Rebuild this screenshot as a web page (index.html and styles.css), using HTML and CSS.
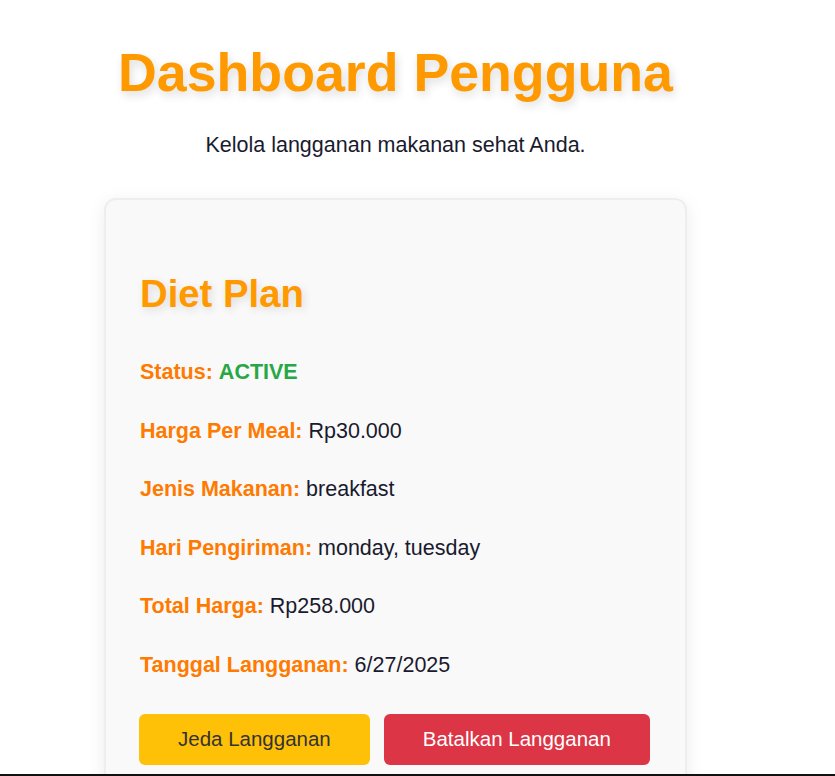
FILE: index.html
```html
<!DOCTYPE html>
<html lang="id">
<head>
<meta charset="utf-8">
<title>Dashboard Pengguna</title>
<link rel="stylesheet" href="styles.css">
</head>
<body>
<main class="page">
  <h1 class="title">Dashboard Pengguna</h1>
  <p class="subtitle">Kelola langganan makanan sehat Anda.</p>
  <section class="card">
    <h2 class="plan-name">Diet Plan</h2>
    <div class="details">
      <p class="row"><span class="label">Status:</span> <span class="status">ACTIVE</span></p>
      <p class="row"><span class="label">Harga Per Meal:</span> Rp30.000</p>
      <p class="row"><span class="label">Jenis Makanan:</span> breakfast</p>
      <p class="row"><span class="label">Hari Pengiriman:</span> monday, tuesday</p>
      <p class="row"><span class="label">Total Harga:</span> Rp258.000</p>
      <p class="row"><span class="label">Tanggal Langganan:</span> 6/27/2025</p>
    </div>
    <div class="actions">
      <button class="btn btn-pause">Jeda Langganan</button>
      <button class="btn btn-cancel">Batalkan Langganan</button>
    </div>
  </section>
</main>
<div class="bottom-line"></div>
</body>
</html>
```
FILE: styles.css
```css
html, body {
  margin: 0;
  padding: 0;
  background: #ffffff;
  font-family: "Liberation Sans", Arial, sans-serif;
  color: #1a1a2e;
}
.page {
  width: 791px;
  display: flex;
  flex-direction: column;
  align-items: center;
  padding-top: 41px;
}
.title {
  margin: 0;
  font-size: 53.7px;
  font-weight: 700;
  line-height: 62px;
  color: #ff9900;
  text-shadow: 2px 4px 10px rgba(0, 0, 0, 0.14);
}
.subtitle {
  margin: 30px 0 0;
  font-size: 21.5px;
  line-height: 25px;
  color: #1a1a2e;
}
.card {
  margin-top: 40px;
  width: 583px;
  box-sizing: border-box;
  background: #f9f9f9;
  border: 2px solid #eeeeee;
  border-radius: 12px;
  box-shadow: 0 4px 18px rgba(0, 0, 0, 0.08);
  padding: 72px 32px 40px 33px;
}
.plan-name {
  margin: 0 0 0 1px;
  font-size: 38.3px;
  line-height: 44px;
  font-weight: 700;
  color: #ff9900;
  text-shadow: 2px 3px 8px rgba(0, 0, 0, 0.12);
}
.details {
  margin-top: 44px;
  margin-left: 1px;
  display: flex;
  flex-direction: column;
  gap: 33.5px;
}
.row {
  margin: 0;
  font-size: 21.5px;
  line-height: 25px;
  color: #1a1a2e;
}
.label {
  font-weight: 700;
  color: #ff7a00;
}
.status {
  font-weight: 700;
  color: #28a745;
}
.actions {
  margin-top: 36px;
  display: flex;
  gap: 14px;
}
.btn {
  flex-shrink: 0;
  white-space: nowrap;
  font-family: "Liberation Sans", Arial, sans-serif;
  font-size: 20.5px;
  line-height: 22px;
  padding: 14.5px 39px;
  border: none;
  border-radius: 6px;
  cursor: pointer;
}
.btn-pause {
  background: #ffc107;
  color: #333333;
}
.btn-cancel {
  background: #dc3545;
  color: #ffffff;
}
.bottom-line {
  position: fixed;
  left: 0;
  right: 0;
  bottom: 0;
  height: 2px;
  background: #111111;
}
```
